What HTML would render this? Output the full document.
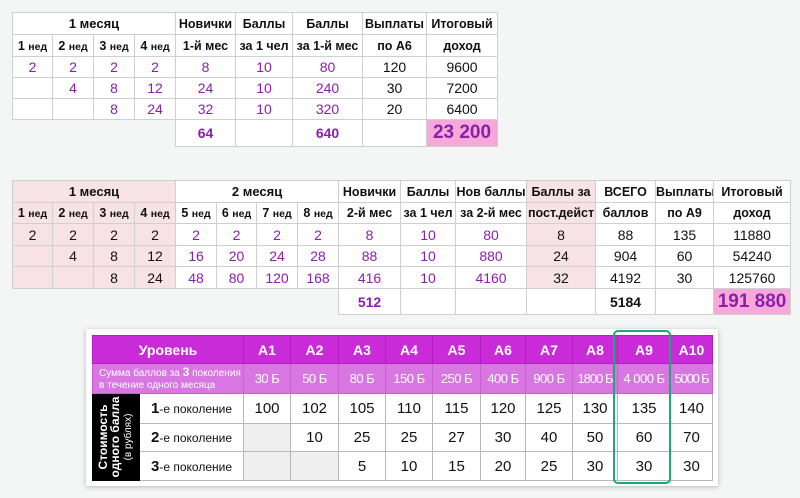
<!DOCTYPE html>
<html><head><meta charset="utf-8"><style>
body{margin:0;width:800px;height:498px;background:#f3f6f5;font-family:"Liberation Sans",sans-serif;position:relative;overflow:hidden}
table{position:absolute;border-collapse:collapse;table-layout:fixed}
td{border:1px solid #cfcfcf;text-align:center;padding:0;white-space:nowrap;overflow:hidden;font-size:14px;color:#111;background:#fff}
.h{font-weight:bold;font-size:12.5px}
.p{color:#8b1fab}
.b{font-weight:bold}
.k{background:#f7e2e5}
.pk{background:#f6a9d8;color:#8b1fab;font-weight:bold;font-size:19px}
.n{border:none;background:transparent}
small{font-size:10.5px}
#t3 td{font-size:15px;border-color:#b8b8b8}
#t3 .hd{background:#c92bd8;color:#fff;font-weight:bold;font-size:14px;border-color:#b020c0}
#t3 .sb{background:#d877e2;color:#fff;font-size:13px;letter-spacing:-.5px;border-color:#c860d4}
#t3 .g{background:#efefef}
</style></head><body>

<table id="t1" style="left:12px;top:12px;width:485px">
<colgroup><col style="width:40px"><col style="width:41px"><col style="width:41px"><col style="width:41px"><col style="width:60px"><col style="width:57px"><col style="width:70px"><col style="width:64px"><col style="width:71px"></colgroup>
<tr style="height:22px"><td colspan="4" class="h" style="font-size:13px">1 месяц</td><td class="h">Новички</td><td class="h">Баллы</td><td class="h">Баллы</td><td class="h">Выплаты</td><td class="h">Итоговый</td></tr>
<tr style="height:22px"><td class="h">1 <small>нед</small></td><td class="h">2 <small>нед</small></td><td class="h">3 <small>нед</small></td><td class="h">4 <small>нед</small></td><td class="h">1-й мес</td><td class="h">за 1 чел</td><td class="h">за 1-й мес</td><td class="h">по А6</td><td class="h">доход</td></tr>
<tr style="height:21px"><td class="p">2</td><td class="p">2</td><td class="p">2</td><td class="p">2</td><td class="p">8</td><td class="p">10</td><td class="p">80</td><td>120</td><td>9600</td></tr>
<tr style="height:21px"><td></td><td class="p">4</td><td class="p">8</td><td class="p">12</td><td class="p">24</td><td class="p">10</td><td class="p">240</td><td>30</td><td>7200</td></tr>
<tr style="height:21px"><td></td><td></td><td class="p">8</td><td class="p">24</td><td class="p">32</td><td class="p">10</td><td class="p">320</td><td>20</td><td>6400</td></tr>
<tr style="height:27px"><td class="n" colspan="4"></td><td class="p b">64</td><td></td><td class="p b">640</td><td></td><td class="pk">23 200</td></tr>
</table>

<table id="t2" style="left:12px;top:180px;width:778px">
<colgroup><col style="width:40px"><col style="width:41px"><col style="width:41px"><col style="width:41px"><col style="width:41px"><col style="width:40px"><col style="width:41px"><col style="width:41px"><col style="width:62px"><col style="width:55px"><col style="width:71px"><col style="width:69px"><col style="width:60px"><col style="width:58px"><col style="width:77px"></colgroup>
<tr style="height:22px"><td colspan="4" class="h k" style="font-size:13px">1 месяц</td><td colspan="4" class="h" style="font-size:13px">2 месяц</td><td class="h">Новички</td><td class="h">Баллы</td><td class="h">Нов баллы</td><td class="h k">Баллы за</td><td class="h">ВСЕГО</td><td class="h">Выплаты</td><td class="h">Итоговый</td></tr>
<tr style="height:21px"><td class="h k">1 <small>нед</small></td><td class="h k">2 <small>нед</small></td><td class="h k">3 <small>нед</small></td><td class="h k">4 <small>нед</small></td><td class="h">5 <small>нед</small></td><td class="h">6 <small>нед</small></td><td class="h">7 <small>нед</small></td><td class="h">8 <small>нед</small></td><td class="h">2-й мес</td><td class="h">за 1 чел</td><td class="h">за 2-й мес</td><td class="h k">пост.дейст</td><td class="h">баллов</td><td class="h">по А9</td><td class="h">доход</td></tr>
<tr style="height:22px"><td class="k">2</td><td class="k">2</td><td class="k">2</td><td class="k">2</td><td class="p">2</td><td class="p">2</td><td class="p">2</td><td class="p">2</td><td class="p">8</td><td class="p">10</td><td class="p">80</td><td class="k">8</td><td>88</td><td>135</td><td>11880</td></tr>
<tr style="height:21px"><td class="k"></td><td class="k">4</td><td class="k">8</td><td class="k">12</td><td class="p">16</td><td class="p">20</td><td class="p">24</td><td class="p">28</td><td class="p">88</td><td class="p">10</td><td class="p">880</td><td class="k">24</td><td>904</td><td>60</td><td>54240</td></tr>
<tr style="height:22px"><td class="k"></td><td class="k"></td><td class="k">8</td><td class="k">24</td><td class="p">48</td><td class="p">80</td><td class="p">120</td><td class="p">168</td><td class="p">416</td><td class="p">10</td><td class="p">4160</td><td class="k">32</td><td>4192</td><td>30</td><td>125760</td></tr>
<tr style="height:26px"><td class="n" colspan="8"></td><td class="p b">512</td><td></td><td></td><td></td><td class="b">5184</td><td></td><td class="pk">191 880</td></tr>
</table>

<div style="position:absolute;left:86px;top:329px;width:632px;height:157px;background:#fff;box-shadow:0 1px 5px rgba(0,0,0,.25)"></div>
<table id="t3" style="left:92px;top:335px;width:620px">
<colgroup><col style="width:47px"><col style="width:104px"><col style="width:47px"><col style="width:48px"><col style="width:47px"><col style="width:47px"><col style="width:48px"><col style="width:45px"><col style="width:47px"><col style="width:45px"><col style="width:53px"><col style="width:42px"></colgroup>
<tr style="height:28px"><td colspan="2" class="hd">Уровень</td><td class="hd">A1</td><td class="hd">A2</td><td class="hd">A3</td><td class="hd">A4</td><td class="hd">A5</td><td class="hd">A6</td><td class="hd">A7</td><td class="hd">A8</td><td class="hd">A9</td><td class="hd">A10</td></tr>
<tr style="height:30px"><td colspan="2" class="sb" style="text-align:left;padding-left:6px;font-size:10px;line-height:12px;letter-spacing:0">Сумма баллов за <b style="font-size:12px">3</b> поколения<br>в течение одного месяца</td><td class="sb">30 Б</td><td class="sb">50 Б</td><td class="sb">80 Б</td><td class="sb">150 Б</td><td class="sb">250 Б</td><td class="sb">400 Б</td><td class="sb">900 Б</td><td class="sb" style="letter-spacing:-1px">1800 Б</td><td class="sb">4 000 Б</td><td class="sb" style="letter-spacing:-1.2px">5000 Б</td></tr>
<tr style="height:30px"><td rowspan="3" style="background:#000;border-color:#000;position:relative"><div style="position:absolute;left:50%;top:50%;transform:translate(-50%,-50%) rotate(-90deg);color:#fff;font-size:12px;font-weight:bold;line-height:12px;text-align:center">Стоимость<br>одного балла<br><span style="font-weight:normal;font-size:10px">(в рублях)</span></div></td><td style="font-size:12px"><b style="font-size:15px">1</b>-е поколение</td><td>100</td><td>102</td><td>105</td><td>110</td><td>115</td><td>120</td><td>125</td><td>130</td><td>135</td><td>140</td></tr>
<tr style="height:28px"><td style="font-size:12px"><b style="font-size:15px">2</b>-е поколение</td><td class="g"></td><td>10</td><td>25</td><td>25</td><td>27</td><td>30</td><td>40</td><td>50</td><td>60</td><td>70</td></tr>
<tr style="height:29px"><td style="font-size:12px"><b style="font-size:15px">3</b>-е поколение</td><td class="g"></td><td class="g"></td><td>5</td><td>10</td><td>15</td><td>20</td><td>25</td><td>30</td><td>30</td><td>30</td></tr>
</table>
<div style="position:absolute;left:613px;top:330px;width:54px;height:150px;border:2px solid #1aaa78;border-radius:5px"></div>
</body></html>
